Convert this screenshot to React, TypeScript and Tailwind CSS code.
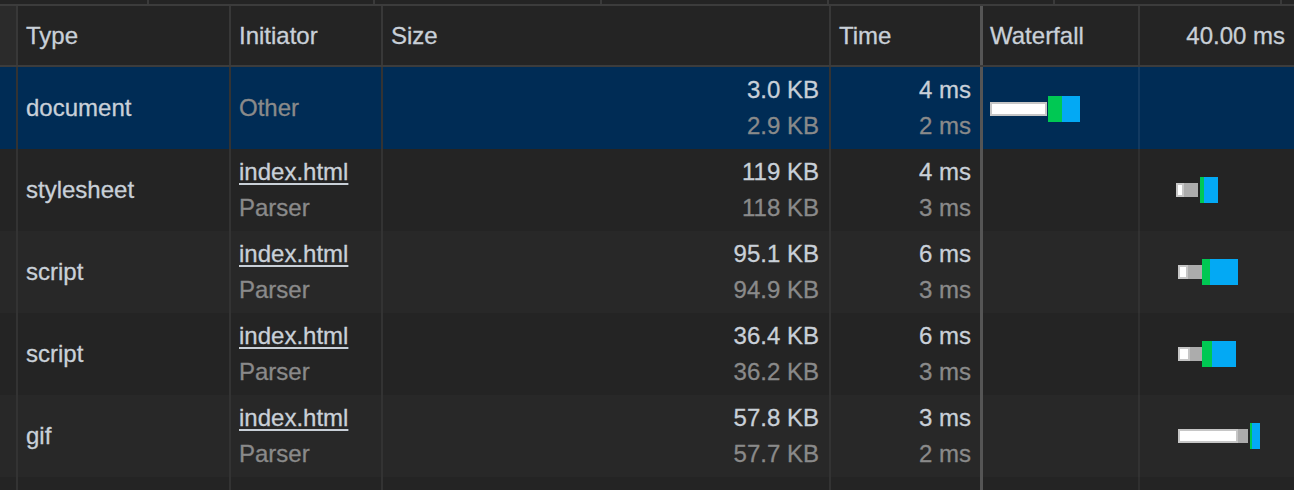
import React from "react";

type Seg = { x: number; w: number; y: number; h: number; c: string };

type RowData = {
  type: string;
  init: string;
  initSub?: string;
  size: string;
  sizeSub: string;
  time: string;
  timeSub: string;
  selected?: boolean;
  bg: string;
  segs: Seg[];
};

const L = "#c6c6c6";
const W = "#ffffff";
const G = "#acacac";
const GR = "#00c853";
const BL = "#03a9f4";

const rows: RowData[] = [
  {
    type: "document",
    init: "Other",
    size: "3.0 KB",
    sizeSub: "2.9 KB",
    time: "4 ms",
    timeSub: "2 ms",
    selected: true,
    bg: "bg-[#002c55]",
    segs: [
      { x: 7, w: 57, y: 35, h: 14, c: L },
      { x: 9, w: 53, y: 37, h: 10, c: W },
      { x: 65, w: 14, y: 29, h: 26, c: GR },
      { x: 79, w: 18, y: 29, h: 26, c: BL },
    ],
  },
  {
    type: "stylesheet",
    init: "index.html",
    initSub: "Parser",
    size: "119 KB",
    sizeSub: "118 KB",
    time: "4 ms",
    timeSub: "3 ms",
    bg: "bg-[#242424]",
    segs: [
      { x: 193, w: 8, y: 34, h: 14, c: L },
      { x: 195, w: 4, y: 36, h: 10, c: W },
      { x: 201, w: 14, y: 34, h: 14, c: G },
      { x: 217, w: 4, y: 28, h: 26, c: GR },
      { x: 221, w: 14, y: 28, h: 26, c: BL },
    ],
  },
  {
    type: "script",
    init: "index.html",
    initSub: "Parser",
    size: "95.1 KB",
    sizeSub: "94.9 KB",
    time: "6 ms",
    timeSub: "3 ms",
    bg: "bg-[#282828]",
    segs: [
      { x: 195, w: 10, y: 34, h: 14, c: L },
      { x: 197, w: 6, y: 36, h: 10, c: W },
      { x: 205, w: 14, y: 34, h: 14, c: G },
      { x: 219, w: 8, y: 28, h: 26, c: GR },
      { x: 227, w: 28, y: 28, h: 26, c: BL },
    ],
  },
  {
    type: "script",
    init: "index.html",
    initSub: "Parser",
    size: "36.4 KB",
    sizeSub: "36.2 KB",
    time: "6 ms",
    timeSub: "3 ms",
    bg: "bg-[#242424]",
    segs: [
      { x: 195, w: 12, y: 34, h: 14, c: L },
      { x: 197, w: 8, y: 36, h: 10, c: W },
      { x: 207, w: 12, y: 34, h: 14, c: G },
      { x: 219, w: 10, y: 28, h: 26, c: GR },
      { x: 229, w: 24, y: 28, h: 26, c: BL },
    ],
  },
  {
    type: "gif",
    init: "index.html",
    initSub: "Parser",
    size: "57.8 KB",
    sizeSub: "57.7 KB",
    time: "3 ms",
    timeSub: "2 ms",
    bg: "bg-[#282828]",
    segs: [
      { x: 195, w: 60, y: 34, h: 14, c: L },
      { x: 197, w: 56, y: 36, h: 10, c: W },
      { x: 255, w: 10, y: 34, h: 14, c: G },
      { x: 267, w: 2, y: 28, h: 26, c: GR },
      { x: 269, w: 8, y: 28, h: 26, c: BL },
    ],
  },
];

function Row({ r }: { r: RowData }) {
  return (
    <div className={`flex h-[82px] ${r.bg}`}>
      <div className="w-[16px] shrink-0" />
      <div className="w-[213px] shrink-0 border-l-2 border-[#333333] pl-2 flex items-center">
        <span className="text-[#c9d0d8]">{r.type}</span>
      </div>
      <div className="w-[152px] shrink-0 border-l-2 border-[#333333] pl-2 flex flex-col justify-center">
        {r.initSub ? (
          <>
            <span className="leading-[36px] text-[#c9d0d8] underline decoration-2 underline-offset-[3px]">
              {r.init}
            </span>
            <span className="leading-[36px] text-[#8a8a8a]">{r.initSub}</span>
          </>
        ) : (
          <span className="text-[#8a8a8a]">{r.init}</span>
        )}
      </div>
      <div className="w-[448px] shrink-0 border-l-2 border-[#333333] pr-[10px] flex flex-col justify-center items-end">
        <span className="leading-[36px] text-[#c9d0d8]">{r.size}</span>
        <span className="leading-[36px] text-[#8a8a8a]">{r.sizeSub}</span>
      </div>
      <div className="w-[151px] shrink-0 border-l-2 border-[#333333] pr-[9px] flex flex-col justify-center items-end">
        <span className="leading-[36px] text-[#c9d0d8]">{r.time}</span>
        <span className="leading-[36px] text-[#8a8a8a]">{r.timeSub}</span>
      </div>
      <div className="flex-1 border-l-[3px] border-[#555555] relative">
        <svg width="311" height="82" className="absolute left-0 top-0">
          <rect
            x={155}
            y={0}
            width={2}
            height={82}
            fill={r.selected ? "rgba(255,255,255,0.07)" : "rgba(255,255,255,0.05)"}
          />
          {r.segs.map((s, i) => (
            <rect key={i} x={s.x} y={s.y} width={s.w} height={s.h} fill={s.c} />
          ))}
        </svg>
      </div>
    </div>
  );
}

export default function App() {
  return (
    <div className="w-[1294px] h-[490px] overflow-hidden bg-[#242424] font-['Liberation_Sans',Arial,sans-serif] text-[24px] [-webkit-text-stroke:0.3px_currentColor]">
      {/* overview strip */}
      <div className="flex h-[4px] bg-[#242424]">
        <div className="w-[147px] shrink-0" />
        <div className="w-[226px] shrink-0 border-l-2 border-[#3a3a3a]" />
        <div className="w-[227px] shrink-0 border-l-2 border-[#3a3a3a]" />
        <div className="w-[227px] shrink-0 border-l-2 border-[#3a3a3a]" />
        <div className="w-[226px] shrink-0 border-l-2 border-[#3a3a3a]" />
        <div className="w-[227px] shrink-0 border-l-2 border-[#3a3a3a]" />
        <div className="flex-1 border-l-2 border-[#3a3a3a]" />
      </div>
      <div className="h-[2px] bg-[#3c3c3c]" />
      {/* header */}
      <div className="flex h-[59px] bg-[#242424] text-[#c9d0d8]">
        <div className="w-[16px] shrink-0 bg-[#2b2b2b]" />
        <div className="w-[213px] shrink-0 border-l-2 border-[#383838] pl-2 flex items-center">Type</div>
        <div className="w-[152px] shrink-0 border-l-2 border-[#383838] pl-2 flex items-center">Initiator</div>
        <div className="w-[448px] shrink-0 border-l-2 border-[#383838] pl-2 flex items-center">Size</div>
        <div className="w-[151px] shrink-0 border-l-2 border-[#383838] pl-2 flex items-center">Time</div>
        <div className="flex-1 border-l-[3px] border-[#555555] flex">
          <div className="w-[155px] shrink-0 pl-[7px] flex items-center">Waterfall</div>
          <div className="flex-1 border-l-2 border-[#383838] pr-[9px] flex items-center justify-end">
            40.00 ms
          </div>
        </div>
      </div>
      <div className="h-[2px] bg-[#3c3c3c]" />
      {rows.map((r, i) => (
        <Row key={i} r={r} />
      ))}
      {/* partial next row */}
      <div className="flex h-[20px] bg-[#242424]">
        <div className="w-[16px] shrink-0" />
        <div className="w-[213px] shrink-0 border-l-2 border-[#333333]" />
        <div className="w-[152px] shrink-0 border-l-2 border-[#333333]" />
        <div className="w-[448px] shrink-0 border-l-2 border-[#333333]" />
        <div className="w-[151px] shrink-0 border-l-2 border-[#333333]" />
        <div className="flex-1 border-l-[3px] border-[#555555] flex">
          <div className="w-[155px] shrink-0" />
          <div className="flex-1 border-l-2 border-[#2f2f2f]" />
        </div>
      </div>
    </div>
  );
}
